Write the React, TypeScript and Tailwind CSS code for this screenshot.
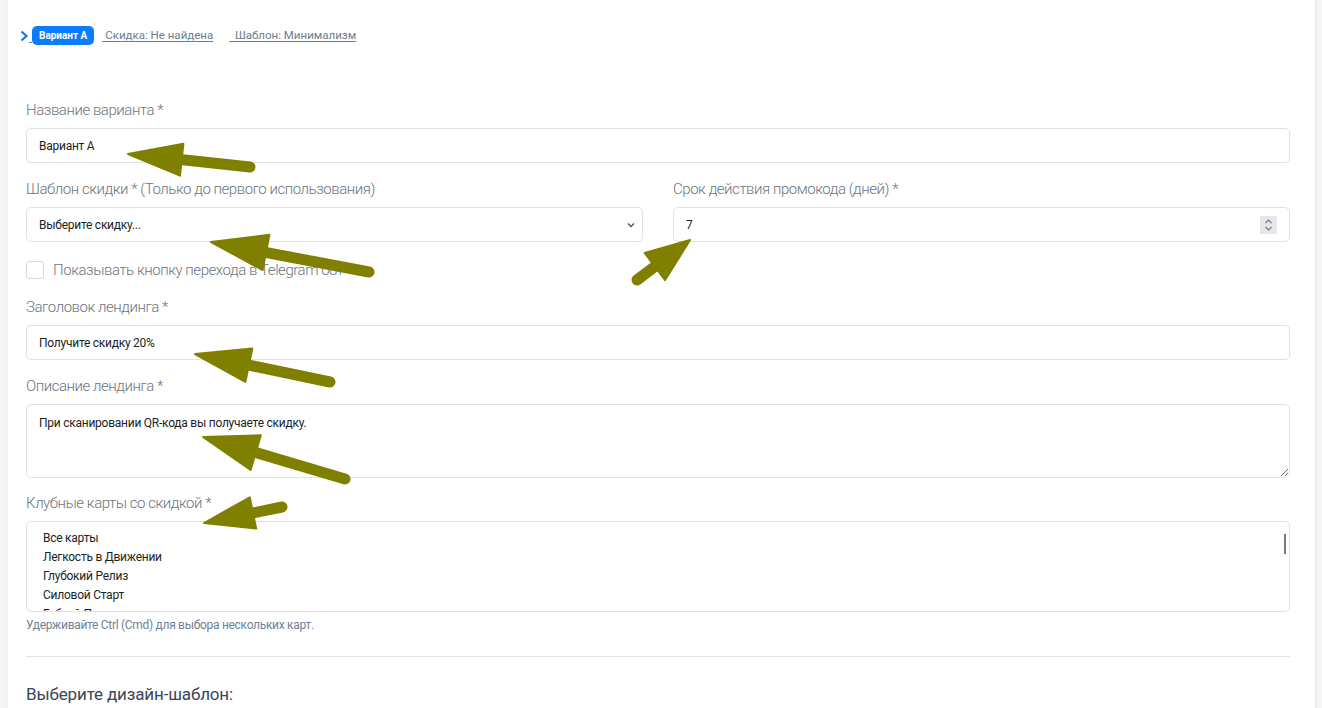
import React from "react";

type Pt = [number, number];

function Arrow({ t, p, hl, hw, sw }: { t: Pt; p: Pt; hl: number; hw: number; sw: number }) {
  const dx = p[0] - t[0];
  const dy = p[1] - t[1];
  const L = Math.hypot(dx, dy);
  const ux = dx / L;
  const uy = dy / L;
  const nx = -uy;
  const ny = ux;
  const bx = p[0] - ux * hl;
  const by = p[1] - uy * hl;
  const pts = `${p[0]},${p[1]} ${bx + (nx * hw) / 2},${by + (ny * hw) / 2} ${bx - (nx * hw) / 2},${by - (ny * hw) / 2}`;
  return (
    <g>
      <line x1={t[0]} y1={t[1]} x2={bx + ux * 6} y2={by + uy * 6} stroke="#808000" strokeWidth={sw} strokeLinecap="round" />
      <polygon points={pts} fill="#808000" strokeLinejoin="round" stroke="#808000" strokeWidth={2} />
    </g>
  );
}

const labelCls = "block text-[15px] leading-[22px] font-light text-[#6c757d] tracking-[-0.45px]";
const inputCls =
  "h-[35px] w-full rounded-[5px] border border-[#dee2e6] bg-white pl-[12px] flex items-center text-[12px] font-normal text-[#1c1f23] tracking-[-0.25px]";

export default function App() {
  return (
    <div className="relative h-[708px] w-[1322px] overflow-hidden bg-[#f6f7f8]" style={{ fontFamily: "Roboto, 'Liberation Sans', sans-serif" }}>
      <div className="ml-[8px] mr-[6px] mt-[-10px] h-[740px] rounded-tr-[12px] border-r border-[#e4e6e9] bg-white pl-[10px] pr-[17px] pt-[36px] shadow-[0_0_10px_rgba(0,0,0,0.05)]">
        {/* tabs */}
        <div className="flex h-[19px] items-center">
          <svg width="10" height="12" viewBox="0 0 10 12" className="ml-[1px]">
            <path d="M2.5 1.5 L7.5 6 L2.5 10.5" fill="none" stroke="#1a73f0" strokeWidth="2.2" />
          </svg>
          <span className="w-[3px] self-end mb-[2px] border-b border-[#6b7c93]" />
          <span className="flex h-[19px] items-center rounded-[5px] bg-[#0b7bff] px-[7px] text-[10px] font-bold text-white">Вариант А</span>
          <span className="ml-[8px] text-[11.5px] text-[#6b7c93] underline underline-offset-[2px]">&nbsp;Скидка: Не найдена</span>
          <span className="ml-[16px] text-[11.5px] text-[#6b7c93] underline underline-offset-[2px]">&nbsp;&nbsp;Шаблон: Минимализм</span>
        </div>

        <div className="px-[8px] pt-[54px]">
          <label className={labelCls}>Название варианта *</label>
          <div className={`${inputCls} mt-[7px]`}>Вариант А</div>

          <div className="mt-[15px] grid grid-cols-2 gap-[30px]">
            <div>
              <label className={labelCls}>Шаблон скидки * (Только до первого использования)</label>
              <div className={`${inputCls} mt-[7px] justify-between pr-[6px]`}>
                <span>Выберите скидку...</span>
                <svg width="10" height="8" viewBox="0 0 10 8">
                  <path d="M2 2.5 L5 5.5 L8 2.5" fill="none" stroke="#555" strokeWidth="1.4" />
                </svg>
              </div>
            </div>
            <div>
              <label className={labelCls}>Срок действия промокода (дней) *</label>
              <div className={`${inputCls} mt-[7px] justify-between pr-[12px]`}>
                <span>7</span>
                <div className="flex h-[18px] w-[17px] flex-col items-center justify-center bg-[#e6e6ec]">
                  <svg width="9" height="14" viewBox="0 0 9 14">
                    <path d="M1.5 5 L4.5 2 L7.5 5" fill="none" stroke="#777" strokeWidth="1.1" />
                    <path d="M1.5 9 L4.5 12 L7.5 9" fill="none" stroke="#777" strokeWidth="1.1" />
                  </svg>
                </div>
              </div>
            </div>
          </div>

          <div className="mt-[17px] flex h-[22px] items-center">
            <span className="h-[18px] w-[18px] rounded-[3px] border border-[#d5d9de] bg-white" />
            <span className="ml-[9px] text-[15px] font-light text-[#6c757d] tracking-[-0.45px]">Показывать кнопку перехода в Telegram бот</span>
          </div>

          <label className={`${labelCls} mt-[15px]`}>Заголовок лендинга *</label>
          <div className={`${inputCls} mt-[7px]`}>Получите скидку 20%</div>

          <label className={`${labelCls} mt-[15px]`}>Описание лендинга *</label>
          <textarea
            readOnly
            defaultValue="При сканировании QR-кода вы получаете скидку."
            className="mt-[7px] block h-[74px] w-full rounded-[5px] border border-[#dee2e6] bg-white px-[12px] pt-[9px] text-[12px] font-normal tracking-[-0.25px] text-[#1c1f23] outline-none"
          />

          <label className={`${labelCls} mt-[14px]`}>Клубные карты со скидкой *</label>
          <div className="relative mt-[7px] h-[91px] overflow-hidden rounded-[5px] border border-[#dee2e6] bg-white pl-[16px] pt-[7px] text-[12px] font-normal tracking-[-0.25px] leading-[19px] text-[#1c1f23]">
            <div>Все карты</div>
            <div>Легкость в Движении</div>
            <div>Глубокий Релиз</div>
            <div>Силовой Старт</div>
            <div>Гибкий Поток</div>
            <span className="absolute right-[3px] top-[12px] h-[20px] w-[2px] bg-[#7a7a7a]" />
          </div>
          <div className="mt-[5px] text-[12px] leading-[16px] tracking-[-0.3px] text-[#6f8296]">Удерживайте Ctrl (Cmd) для выбора нескольких карт.</div>

          <div className="mt-[23px] border-t border-[#e1e4e8]" />

          <div className="mt-[25px] text-[17px] leading-[24px] tracking-[-0.15px] text-[#3b4656]">Выберите дизайн-шаблон:</div>
        </div>
      </div>

      <svg className="pointer-events-none absolute left-0 top-0" width="1322" height="708">
        <Arrow t={[250, 167]} p={[128, 154]} hl={54} hw={32} sw={11} />
        <Arrow t={[369, 272]} p={[211, 242]} hl={56} hw={36} sw={11} />
        <Arrow t={[637, 280]} p={[690, 240]} hl={44} hw={34} sw={11} />
        <Arrow t={[330, 382]} p={[195, 354]} hl={55} hw={34} sw={11} />
        <Arrow t={[345, 479]} p={[203, 437]} hl={55} hw={36} sw={11} />
        <Arrow t={[282, 507]} p={[204, 523]} hl={50} hw={32} sw={11} />
      </svg>
    </div>
  );
}
